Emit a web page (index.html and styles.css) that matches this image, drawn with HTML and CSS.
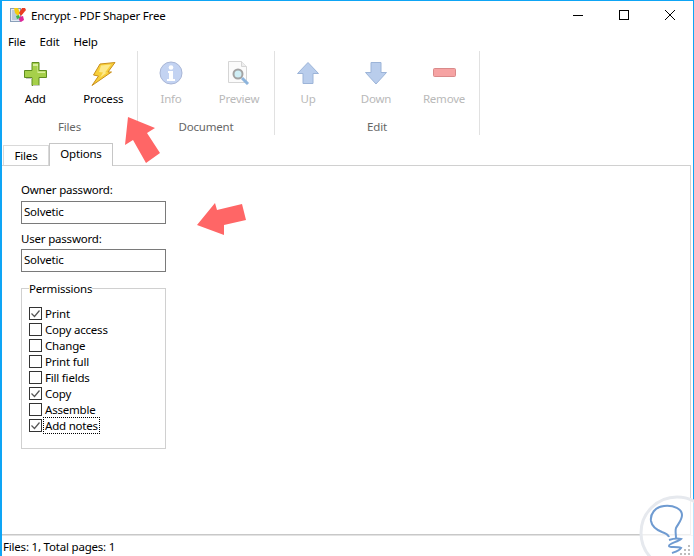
FILE: index.html
```html
<!DOCTYPE html>
<html lang="en">
<head>
<meta charset="utf-8">
<title>Encrypt - PDF Shaper Free</title>
<link rel="stylesheet" href="styles.css">
</head>
<body>
<div class="window">
  <header class="titlebar">
    <svg class="app-icon" width="16" height="14" viewBox="0 0 16 14">
      <rect x="0.5" y="0.5" width="10" height="13" fill="#e4ebf4" stroke="#8aa0ba"/>
      <path d="M2 3h7M2 5h7M2 7h7M2 9h7M2 11h7" stroke="#90a8c4"/>
      <path d="M4 0h4l2 5-2 3-3-3z" fill="#f4cb12"/>
      <path d="M12 0h3l1 2-5 6-2-3z" fill="#ea3d22"/>
      <path d="M9 9l4-1 1 4-3 2-2-2z" fill="#e0259a"/>
      <path d="M6 8l3-1 1 3-3 1z" fill="#3cb44a"/>
    </svg>
    <span class="title">Encrypt - PDF Shaper Free</span>
    <div class="win-btns">
      <svg class="win-btn" width="46" height="30" viewBox="0 0 46 30"><path d="M18 14.500h10" stroke="#000"/></svg>
      <svg class="win-btn" width="46" height="30" viewBox="0 0 46 30"><rect x="18.500" y="9.500" width="9" height="9" fill="none" stroke="#000"/></svg>
      <svg class="win-btn" width="46" height="30" viewBox="0 0 46 30"><path d="M18 9l10 10M28 9L18 19" stroke="#000"/></svg>
    </div>
  </header>
  <nav class="menubar"><span>File</span><span>Edit</span><span>Help</span></nav>
  <section class="ribbon">
    <div class="group group-files">
      <div class="tools">
        <div class="tool tool-add">
          <svg width="23" height="24" viewBox="0 0 23 24"><path d="M8 .5h7v8h7.500v7H15v8H8v-8H.5v-7H8z" fill="#a6d04a" stroke="#5f8d20"/><path d="M9 2h5v7.500h7v1.500h-7.500V4H9z" fill="#d8ee9c"/><path d="M2 16.500h6M9 23.500h6" stroke="#c8c8c8"/></svg>
          <span>Add</span>
        </div>
        <div class="tool tool-process">
          <svg width="25" height="24" viewBox="0 0 25 24"><path d="M9 2l15-1.500-7 9.500h3.500L1 23.500l6.500-9.500-5-1z" fill="#f7cf3a" stroke="#c98f1c"/><path d="M10 3.500l10-1-6 8 2 0-7 5 3-5-4-.5z" fill="#fde98c"/></svg>
          <span>Process</span>
        </div>
      </div>
      <div class="group-label">Files</div>
    </div>
    <div class="group group-doc">
      <div class="tools">
        <div class="tool tool-info disabled">
          <svg class="icon-tall" width="24" height="24" viewBox="0 0 24 24"><circle cx="12" cy="12" r="11" fill="#c3d3f2" stroke="#a9b6d6"/><circle cx="12" cy="6.500" r="2.300" fill="#fff"/><path d="M9 10h5v8h2v2H8v-2h2v-6H9z" fill="#fff"/></svg>
          <span>Info</span>
        </div>
        <div class="tool tool-preview disabled">
          <svg class="icon-tall" width="24" height="24" viewBox="0 0 24 24"><path d="M1.500.5h13l5 5v16h-18z" fill="#fbfbfb" stroke="#d5d5d5"/><path d="M14.500.5v5h5" fill="#eee" stroke="#d5d5d5"/><circle cx="11" cy="13" r="4.500" fill="#cfeef5" stroke="#a3a3a3" stroke-width="2"/><path d="M15 17l6 6" stroke="#8db4dc" stroke-width="3"/></svg>
          <span>Preview</span>
        </div>
      </div>
      <div class="group-label">Document</div>
    </div>
    <div class="group group-edit">
      <div class="tools">
        <div class="tool tool-up disabled">
          <svg width="22" height="24" viewBox="0 0 22 24"><path d="M11 .5l10.500 11h-5.500v10H6v-10H.5z" fill="#b9cdec" stroke="#9cb4d8"/></svg>
          <span>Up</span>
        </div>
        <div class="tool tool-down disabled">
          <svg width="22" height="24" viewBox="0 0 22 24"><path d="M6 .5h10v10h5.500L11 22 .5 10.500H6z" fill="#b9cdec" stroke="#9cb4d8"/></svg>
          <span>Down</span>
        </div>
        <div class="tool tool-remove disabled">
          <svg width="23" height="24" viewBox="0 0 23 24"><rect x="0.500" y="6.500" width="22" height="8" rx="1" fill="#f6a3a3" stroke="#d98a8a"/></svg>
          <span>Remove</span>
        </div>
      </div>
      <div class="group-label">Edit</div>
    </div>
  </section>
  <div class="tabs">
    <div class="tab">Files</div>
    <div class="tab active">Options</div>
  </div>
  <main class="panel">
    <label class="field-label">Owner password:</label>
    <div class="textbox">Solvetic</div>
    <label class="field-label second">User password:</label>
    <div class="textbox">Solvetic</div>
    <fieldset class="perms">
      <legend>Permissions</legend>
      <div class="check on"><i class="box"><svg width="13" height="13" viewBox="0 0 13 13"><path d="M2.500 6.500l3 3 5-6" fill="none" stroke="#555" stroke-width="1.200"/></svg></i><span>Print</span></div>
      <div class="check"><i class="box"></i><span>Copy access</span></div>
      <div class="check"><i class="box"></i><span>Change</span></div>
      <div class="check"><i class="box"></i><span>Print full</span></div>
      <div class="check"><i class="box"></i><span>Fill fields</span></div>
      <div class="check on"><i class="box"><svg width="13" height="13" viewBox="0 0 13 13"><path d="M2.500 6.500l3 3 5-6" fill="none" stroke="#555" stroke-width="1.200"/></svg></i><span>Copy</span></div>
      <div class="check"><i class="box"></i><span>Assemble</span></div>
      <div class="check on"><i class="box"><svg width="13" height="13" viewBox="0 0 13 13"><path d="M2.500 6.500l3 3 5-6" fill="none" stroke="#555" stroke-width="1.200"/></svg></i><span class="focused">Add notes</span></div>
    </fieldset>
  </main>
  <footer class="statusbar">Files: 1, Total pages: 1</footer>
  <svg class="overlay" width="694" height="556" viewBox="0 0 694 556">
    <path d="M128 117l27 11-8 5 13 20-14 10-13-23-8 5z" fill="#ff6666"/>
    <path d="M197 225l18-22 2 7 25-6 4 16-22 5 0 10z" fill="#ff6666"/>
    <circle cx="677" cy="533" r="36" fill="#fff" fill-opacity="0.7" stroke="#e6e9ee" stroke-width="3"/>
    <path d="M676 538c0-4-1-7 0-10 2-4 6-8 6-13 0-6-8-10-18-9-9 1-14 8-13 15 1 6 6 9 11 11 3 1 6 2 7 5" fill="none" stroke="#6f9bd1" stroke-width="2"/>
    <path d="M669 540c3-1 8-2 12-1-3 3-12 4-12 7 0 2 8 0 12 2-2 3-6 4-9 5" fill="none" stroke="#6f9bd1" stroke-width="2"/>
    <path class="grip" d="M688 545h2v2h-2zM684 549h2v2h-2zM688 549h2v2h-2zM680 553h2v2h-2zM684 553h2v2h-2zM688 553h2v2h-2z" fill="#bdbdbd"/>
  </svg>
</div>
</body>
</html>
```
FILE: styles.css
```css
* { box-sizing: border-box; }
html, body { margin: 0; padding: 0; }
body {
  width: 694px;
  height: 556px;
  overflow: hidden;
  background: #fff;
  font-family: "Noto Sans", "Open Sans", sans-serif;
  font-size: 11.5px;
  letter-spacing: -0.2px;
  color: #000;
}
.window {
  position: relative;
  width: 694px;
  height: 556px;
  display: flex;
  flex-direction: column;
  border-top: 1px solid #0ea5f5;
  border-left: 2px solid #0ea5f5;
  border-right: 1px solid #0ea5f5;
  background: #fff;
}
.titlebar {
  height: 30px;
  display: flex;
  align-items: center;
  padding: 0 0 2px 8px;
  flex: none;
}
.app-icon { margin-right: 5px; }
.win-btns { margin-left: auto; display: flex; align-self: flex-start; }
.win-btn { display: block; }
.menubar {
  height: 20px;
  flex: none;
  display: flex;
  gap: 14px;
  padding-left: 6px;
  align-items: center;
}
.ribbon {
  height: 84px;
  flex: none;
  display: flex;
}
.group {
  display: flex;
  flex-direction: column;
  border-right: 1px solid #e1e1e1;
  height: 84px;
}
.group-files { width: 136px; }
.group-doc { width: 137px; }
.group-edit { width: 205px; }
.tools { display: flex; height: 68px; margin-left: -1px; }
.tool {
  display: flex;
  flex-direction: column;
  align-items: center;
  width: 68px;
}
.tool-add { width: 69px; }
.tool svg { margin-top: 11px; flex: none; }
.tool svg.icon-tall { margin-top: 10px; margin-bottom: 1px; }
.tool span { margin-top: 5px; line-height: 16px; }
.disabled span { color: #b9b9b9; }
.group-label { text-align: center; color: #666; line-height: 16px; }
.tabs {
  height: 30px;
  flex: none;
  display: flex;
  align-items: flex-end;
  padding-left: 1px;
  position: relative;
  z-index: 1;
}
.tab {
  width: 46px;
  height: 20px;
  border: 1px solid #d9d9d9;
  border-bottom: none;
  text-align: center;
  line-height: 19px;
  background: #fff;
}
.tab.active {
  width: 64px;
  height: 23px;
  margin-bottom: -1px;
  border-color: #c6c6c6;
  line-height: 19px;
}
.panel {
  flex: 1;
  margin-right: 2px;
  border-top: 1px solid #d0d0d0;
  border-bottom: 1px solid #c8c8c8;
  border-right: 1px solid #d0d0d0;
  padding: 15px 0 0 19px;
}
.field-label { display: block; line-height: 18px; }
.field-label.second { margin-top: 6px; line-height: 17px; }
.textbox {
  width: 145px;
  height: 23px;
  margin-top: 2px;
  border: 1px solid #7a7a7a;
  padding-left: 2px;
  line-height: 19px;
}
.perms {
  margin: 7px 0 0;
  padding: 8px 0 0 7px;
  width: 145px;
  height: 170px;
  border: 1px solid #d0d0d0;
}
.perms legend { padding: 2px 0 0; line-height: 16px; }
.check { display: flex; align-items: center; height: 16px; }
.box {
  display: block;
  width: 13px;
  height: 13px;
  border: 1px solid #333;
  margin-right: 3px;
  flex: none;
  position: relative;
}
.box svg { position: absolute; left: -1px; top: -1px; }
.focused {
  outline: 1px dotted #000;
  padding: 0 1px;
  margin-left: -1px;
}
.statusbar {
  height: 21px;
  flex: none;
  padding-left: 1px;
  line-height: 22px;
  border-top: 1px solid #e3e3e3;
}
.overlay { position: absolute; left: -2px; top: -1px; pointer-events: none; }
```
